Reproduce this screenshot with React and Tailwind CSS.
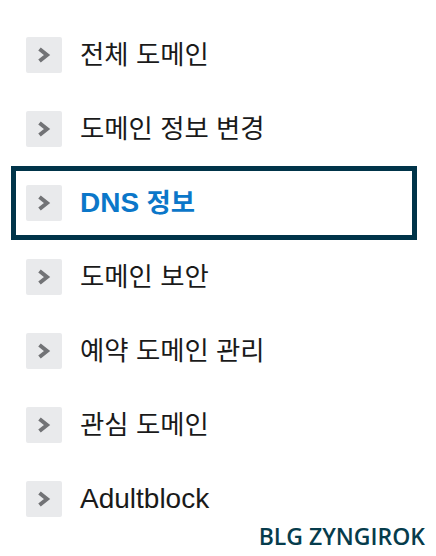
import React from 'react';

const items = [
  { label: '전체 도메인' },
  { label: '도메인 정보 변경' },
  { label: 'DNS', rest: ' 정보', active: true },
  { label: '도메인 보안' },
  { label: '예약 도메인 관리' },
  { label: '관심 도메인' },
  { label: 'Adultblock', latin: true },
];

function Arrow() {
  return (
    <span className="flex h-9 w-9 shrink-0 items-center justify-center rounded-[2px] bg-[#e9eaec]">
      <svg className="blur-[0.6px]" width="14" height="18" viewBox="0 0 14 18" fill="none">
        <path d="M2.5 3l7.5 6-7.5 6" stroke="#727376" strokeWidth="4" />
      </svg>
    </span>
  );
}

export default function App() {
  return (
    <div className="relative h-[556px] w-[436px] overflow-hidden bg-white pt-[18px] font-['Liberation_Sans','Noto_Sans_CJK_KR',sans-serif]">
      <ul>
        {items.map((item) => (
          <li
            key={item.label}
            className={`mx-[11px] flex h-[74px] w-[406px] items-center gap-[18px] border-[5px] px-[10px] ${
              item.active ? 'border-[#003449]' : 'border-transparent'
            }`}
          >
            <Arrow />
            <span
              className={`whitespace-pre leading-none ${item.latin ? 'text-[28px]' : 'text-[26.4px]'} ${
                item.active ? 'font-bold text-[#0b77c9]' : 'text-[#1a1a1a]'
              }`}
            >
              {item.rest ? <span className="text-[28px]">{item.label}</span> : item.label}
              {item.rest}
            </span>
          </li>
        ))}
      </ul>
      <div className="absolute bottom-[6px] right-[11px] font-['Open_Sans',sans-serif] text-[23px] font-semibold leading-[28px] text-[#063c4c]">
        BLG ZYNGIROK
      </div>
    </div>
  );
}
